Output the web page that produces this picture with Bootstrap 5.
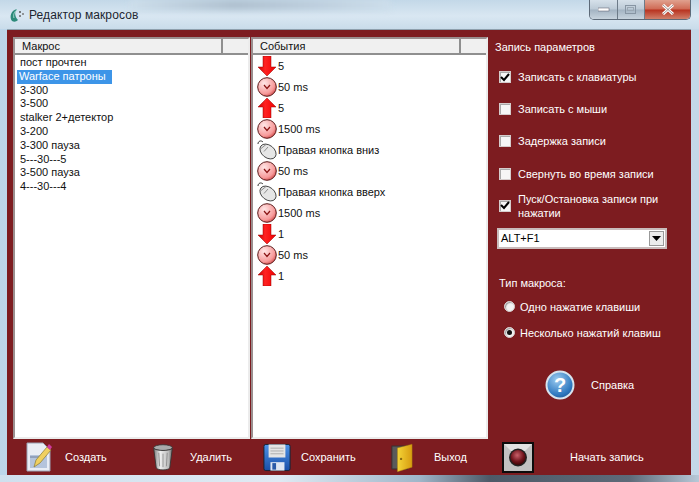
<!DOCTYPE html>
<html lang="ru"><head><meta charset="utf-8"><title>Редактор макросов</title>
<link rel="stylesheet" href="https://cdn.jsdelivr.net/npm/bootstrap@5.3.0/dist/css/bootstrap.min.css">
<style>
html,body{height:100%}
body{width:699px;height:482px;overflow:hidden;font-family:"Liberation Sans",Arial,sans-serif;font-size:11px;line-height:14px;color:#111;
background:linear-gradient(90deg,#bcd6ea 0,#d5e5f1 30%,#cfe0ee 60%,#c4d8e8 100%)}
.defs-holder{position:absolute;width:0;height:0}
.win-title{height:29px;position:relative;background:linear-gradient(180deg,#c3d8e8,#d9e7f2 55%,#c9dcea);}
.blur-a{width:260px;height:10px;margin-left:130px;background:linear-gradient(90deg,#cddeeb,#aebfce 40%,#bccddc 70%,#cddeeb);filter:blur(3px)}
.win-name{font-size:12px;color:#1c2530;padding-left:29px;letter-spacing:.1px}
.win-btns{position:absolute;right:8px;top:0;width:102px;height:20px;border:1px solid #5d6a78;border-top:0;border-radius:0 0 5px 5px;overflow:hidden}
.wb{height:100%;background:linear-gradient(180deg,#d6e1ea,#bccad6 48%,#a3b3c2 52%,#c7d3dd)}
.wb-min{width:28px;border-right:1px solid #6d7b88}.wb-max{width:27px;border-right:1px solid #6d7b88}.wb-close{flex:1;background:linear-gradient(180deg,#e0a18f,#cf6a54 48%,#b8321f 52%,#d0806a)}
.client{margin:0 8px 0 7px;background:#7d1c20;height:446px;flex:none;border-top:1px solid #8fa0ad}
.lists{padding-left:6px;padding-top:7px;height:409px}
.pane{width:237px;background:#fff;border:2px solid;border-color:#9a8f8f #ececec #ececec #9a8f8f;margin-right:1px}
.pane-head{height:16px;background:#f0f0f0;border-bottom:2px solid #8f8f8f;line-height:15px}
.ph-a{width:208px;padding-left:7px;border-right:2px solid #8f8f8f;height:100%}
.ph-b{flex:1}
.ph-list{padding-top:1px}
.row-a{height:13.8px;line-height:13.8px;padding-left:5px}
.row-a.sel{background:#3d95e8;color:#fff;width:95px;padding-left:2px;margin-left:2px}
.row-b{height:21px;display:flex;align-items:center;gap:1px;padding-left:4px}
.row-b svg{flex:none}
.side{flex:1;color:#fff;padding-left:6px}
.side-h{margin-top:3px;height:14px}
.chk-list{margin-top:7px;padding-left:4px}
.chk-row{height:32.2px;display:flex;align-items:center;gap:7px}
.cb{width:12px;height:12px;flex:none;background:#f6f6f6;border:1px solid #d5cccc;box-shadow:inset 1px 1px 0 #aaa;display:flex;align-items:center;justify-content:center}
.combo{width:170px;height:21px;margin-left:2px;margin-top:6px;background:#fff;border:2px solid #c9bcbc;color:#000;display:flex;align-items:center;padding-left:2px}
.combo-btn{width:15px;height:15px;margin-left:auto;margin-right:1px;background:#ececec;border:1px solid #999;display:flex;align-items:center;justify-content:center}
.type-h{margin-top:27px;padding-left:4px}
.rad-list{margin-top:4px;padding-left:9px}
.rad-row{height:26px;display:flex;align-items:center;gap:5px}
.rd{width:11px;height:11px;border-radius:50%;background:#f3f3f3;border:1px solid #d8d0d0;box-shadow:inset 1px 1px 1px #999;flex:none;display:flex;align-items:center;justify-content:center}
.rd i{width:5px;height:5px;border-radius:50%;background:#111;display:block}
.help{margin-top:24px;padding-left:50px;gap:16px}
.toolbar{height:36px;color:#fff;display:grid;grid-template-columns:126px 111px 128px 111px 171px;padding-left:19px;align-items:center}
.tool{display:flex;align-items:center}
.tl-a{gap:13px}.tl-b{gap:16px}.tl-c{gap:10px}.tl-d{gap:21px}.tl-e{gap:36px}
.win-foot{height:7px;background:linear-gradient(90deg,#cfe0ee 0,#dfeaf3 40%,#9fb6c9 60%,#4d5a68 70%,#5d6a78 90%,#b8c9d8 100%)}
</style></head>
<body class="d-flex flex-column">
<svg class="defs-holder" aria-hidden="true"><defs>
<linearGradient id="gr" x1="0" x2="1"><stop offset="0" stop-color="#c00"/><stop offset=".4" stop-color="#f22"/><stop offset="1" stop-color="#e00"/></linearGradient>
<radialGradient id="gc" cx=".35" cy=".3" r=".8"><stop offset="0" stop-color="#ffe6e6"/><stop offset=".7" stop-color="#f79a9a"/><stop offset="1" stop-color="#c83a3a"/></radialGradient>
<radialGradient id="gh" cx=".4" cy=".3" r=".8"><stop offset="0" stop-color="#9ccbf0"/><stop offset=".7" stop-color="#2f79c0"/><stop offset="1" stop-color="#1a4f90"/></radialGradient>
<linearGradient id="gt" x1="0" x2="1"><stop offset="0" stop-color="#777"/><stop offset=".35" stop-color="#eee"/><stop offset=".8" stop-color="#bbb"/><stop offset="1" stop-color="#666"/></linearGradient>
<linearGradient id="gf" x1="0" y1="0" x2="0" y2="1"><stop offset="0" stop-color="#4d93e8"/><stop offset="1" stop-color="#1a4fa8"/></linearGradient>
<linearGradient id="gd" x1="0" x2="1"><stop offset="0" stop-color="#f4d437"/><stop offset="1" stop-color="#d79c10"/></linearGradient>
<radialGradient id="gb" cx=".45" cy=".35" r=".7"><stop offset="0" stop-color="#c9606a"/><stop offset=".6" stop-color="#70141c"/><stop offset="1" stop-color="#300"/></radialGradient>
<symbol id="dn" viewBox="0 0 20 20"><path d="M6 0h8v11h5l-9 9-9-9h5z" fill="url(#gr)" stroke="#900" stroke-width=".5"/></symbol>
<symbol id="up" viewBox="0 0 20 20"><path d="M6 20h8V9h5L10 0 1 9h5z" fill="url(#gr)" stroke="#900" stroke-width=".5"/></symbol>
<symbol id="clk" viewBox="0 0 20 20"><circle cx="10" cy="10" r="9.3" fill="url(#gc)" stroke="#5a1a1a" stroke-width="1"/><path d="M7 8 10 11.500 13 8" fill="none" stroke="#8a1414" stroke-width="1.2"/></symbol>
<symbol id="ms" viewBox="0 0 20 20"><path d="M1 4C1 1 4 0 6 2" fill="none" stroke="#333" stroke-width="1"/><ellipse cx="11" cy="11.500" rx="9" ry="6.300" transform="rotate(38 11 11.500)" fill="#e6e6e6" stroke="#444" stroke-width=".9"/><path d="M3.500 9 9 4.500M7 11.500 11 7" stroke="#777" fill="none" stroke-width=".8"/></symbol>
</defs></svg>

<div class="win-title flex-shrink-0">
  <div class="blur-a position-absolute top-0"></div>
  <div class="d-flex align-items-center h-100">
    <svg class="position-absolute" style="left:8px;top:6px" width="18" height="17" viewBox="0 0 18 17"><path d="M4 15C1 11 3 4 9 3 6 6 7 11 10 14 8 16 6 16 4 15z" fill="#2c8a7a"/><path d="M6 12C5 9 6 6 9 4" stroke="#a5d8cc" fill="none"/><circle cx="12" cy="6" r="1" fill="#555"/><circle cx="15" cy="8" r="1" fill="#777"/><circle cx="12" cy="10" r="1" fill="#666"/></svg>
    <span class="win-name">Редактор макросов</span>
  </div>
  <div class="win-btns d-flex">
    <div class="wb wb-min d-flex align-items-center justify-content-center"><svg width="12" height="5"><rect y="1" width="11" height="3" fill="#fff" stroke="#556" stroke-width=".5"/></svg></div>
    <div class="wb wb-max d-flex align-items-center justify-content-center"><svg width="12" height="10"><rect x=".5" y=".5" width="10" height="8" fill="none" stroke="#8795a3"/><rect x="2.5" y="2.5" width="6" height="3" fill="none" stroke="#9aa7b3"/></svg></div>
    <div class="wb wb-close d-flex align-items-center justify-content-center"><svg width="14" height="11"><path d="M2 1 12 10M12 1 2 10" stroke="#fff" stroke-width="3"/><path d="M2 1 12 10M12 1 2 10" stroke="#5a4a48" stroke-width=".6"/></svg></div>
  </div>
</div>

<div class="client d-flex flex-column">
  <div class="lists d-flex">
    <div class="pane flex-none">
      <div class="pane-head d-flex"><div class="ph-a">Макрос</div><div class="ph-b"></div></div>
      <div class="ph-list">
        <div class="row-a">пост прочтен</div>
        <div class="row-a sel">Warface патроны</div>
        <div class="row-a">3-300</div>
        <div class="row-a">3-500</div>
        <div class="row-a">stalker 2+детектор</div>
        <div class="row-a">3-200</div>
        <div class="row-a">3-300 пауза</div>
        <div class="row-a">5---30---5</div>
        <div class="row-a">3-500 пауза</div>
        <div class="row-a">4---30---4</div>
      </div>
    </div>
    <div class="pane flex-none">
      <div class="pane-head d-flex"><div class="ph-a">События</div><div class="ph-b"></div></div>
      <div>
        <div class="row-b"><svg width="20" height="20"><use href="#dn"/></svg>5</div>
        <div class="row-b"><svg width="20" height="20"><use href="#clk"/></svg>50 ms</div>
        <div class="row-b"><svg width="20" height="20"><use href="#up"/></svg>5</div>
        <div class="row-b"><svg width="20" height="20"><use href="#clk"/></svg>1500 ms</div>
        <div class="row-b"><svg width="20" height="20"><use href="#ms"/></svg>Правая кнопка вниз</div>
        <div class="row-b"><svg width="20" height="20"><use href="#clk"/></svg>50 ms</div>
        <div class="row-b"><svg width="20" height="20"><use href="#ms"/></svg>Правая кнопка вверх</div>
        <div class="row-b"><svg width="20" height="20"><use href="#clk"/></svg>1500 ms</div>
        <div class="row-b"><svg width="20" height="20"><use href="#dn"/></svg>1</div>
        <div class="row-b"><svg width="20" height="20"><use href="#clk"/></svg>50 ms</div>
        <div class="row-b"><svg width="20" height="20"><use href="#up"/></svg>1</div>
      </div>
    </div>
    <div class="side">
      <div class="side-h">Запись параметров</div>
      <div class="chk-list">
        <div class="chk-row"><span class="cb"><svg width="10" height="9"><path d="M1 4 4 7 9 1" fill="none" stroke="#000" stroke-width="2"/></svg></span>Записать с клавиатуры</div>
        <div class="chk-row"><span class="cb"></span>Записать с мыши</div>
        <div class="chk-row"><span class="cb"></span>Задержка записи</div>
        <div class="chk-row"><span class="cb"></span>Свернуть во время записи</div>
        <div class="chk-row"><span class="cb"><svg width="10" height="9"><path d="M1 4 4 7 9 1" fill="none" stroke="#000" stroke-width="2"/></svg></span><span>Пуск/Остановка записи при нажатии</span></div>
      </div>
      <div class="combo">ALT+F1<span class="combo-btn"><svg width="9" height="5"><path d="M0 0h9L4.5 5z" fill="#000"/></svg></span></div>
      <div class="type-h">Тип макроса:</div>
      <div class="rad-list">
        <div class="rad-row"><span class="rd"></span>Одно нажатие клавиши</div>
        <div class="rad-row"><span class="rd"><i></i></span>Несколько нажатий клавиш</div>
      </div>
      <div class="help d-flex align-items-center">
        <svg width="30" height="30" viewBox="0 0 30 30"><circle cx="15" cy="15" r="13.5" fill="url(#gh)" stroke="#d8e4ee" stroke-width="2"/><text x="15" y="22" text-anchor="middle" font-family="Liberation Sans" font-weight="700" font-size="20" fill="#fff">?</text></svg>
        <span>Справка</span>
      </div>
    </div>
  </div>
  <div class="toolbar">
    <div class="tool tl-a"><svg width="26" height="32" viewBox="0 0 26 32"><path d="M1 2h16l7 7v21H1z" fill="#e9edf5" stroke="#9aa3b5"/><rect x="4" y="14" width="17" height="13" fill="#b5c4dc"/><path d="M4 16h10" stroke="#6f7f9c"/><path d="M8 26l2-7L21 6l4 3-11 13z" fill="#f0d060" stroke="#8a7a30" stroke-width=".7"/><path d="M21 6l2-3 3 3-2 3z" fill="#d03aa0"/></svg><span>Создать</span></div>
    <div class="tool tl-b"><svg width="22" height="32" viewBox="0 0 26 32"><ellipse cx="13" cy="5" rx="11" ry="3.5" fill="#aaa" stroke="#333"/><path d="M2 6l3 23c2 3 14 3 16 0l3-23c-4 3-18 3-22 0z" fill="url(#gt)" stroke="#333"/><path d="M8 11l1 16M13 12v16M18 11l-1 16" stroke="#888" fill="none"/></svg><span>Удалить</span></div>
    <div class="tool tl-c"><svg width="28" height="29" viewBox="0 0 30 30"><rect x="1" y="1" width="28" height="28" rx="2" fill="url(#gf)" stroke="#123"/><rect x="6" y="1" width="18" height="14" fill="#e4e4e4"/><path d="M8 5h14M8 8h14M8 11h14" stroke="#aaa"/><rect x="8" y="20" width="15" height="9" fill="#dfe6f2"/><rect x="10" y="21" width="4" height="7" fill="#2a5aa8"/></svg><span>Сохранить</span></div>
    <div class="tool tl-d"><svg width="22" height="31" viewBox="0 0 24 31"><rect x="1" y="3" width="17" height="25" fill="#5a5a5a" stroke="#333"/><path d="M7 5l16-4v25L7 31z" fill="url(#gd)" stroke="#a47a10" stroke-width=".5"/><circle cx="11" cy="17" r="1.3" fill="#8a6a10"/></svg><span>Выход</span></div>
    <div class="tool tl-e"><svg width="32" height="31" viewBox="0 0 32 31"><rect width="32" height="31" fill="#0c0c0c"/><rect x="2" y="2" width="28" height="27" fill="#c2c2c2"/><path d="M2 2h28L21 11H11z" fill="#e2e2e2"/><circle cx="16" cy="15.5" r="9" fill="#222"/><circle cx="16" cy="15.5" r="7.5" fill="url(#gb)"/></svg><span>Начать запись</span></div>
  </div>
</div>
<div class="win-foot flex-shrink-0"></div>
</body></html>
